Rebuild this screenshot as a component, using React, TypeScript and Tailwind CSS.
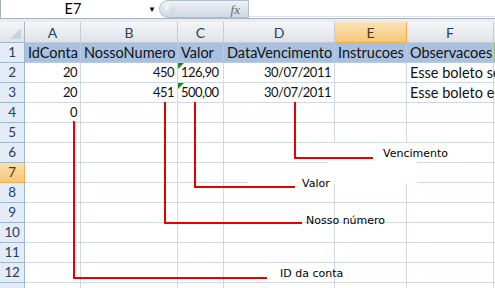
import React from 'react';

const cols = [
  { key: 'A', w: 'w-[56px]' },
  { key: 'B', w: 'w-[97px]' },
  { key: 'C', w: 'w-[46px]' },
  { key: 'D', w: 'w-[111px]' },
  { key: 'E', w: 'w-[72px]' },
  { key: 'F', w: 'w-[87px]' },
];

type Cell = { text?: string; num?: boolean; right?: boolean; flag?: boolean };

const rows: Cell[][] = [
  [{ text: 'IdConta' }, { text: 'NossoNumero' }, { text: 'Valor' }, { text: 'DataVencimento' }, { text: 'Instrucoes' }, { text: 'Observacoes' }],
  [
    { text: '20', num: true, right: true },
    { text: '450', num: true, right: true },
    { text: '126,90', num: true, flag: true },
    { text: '30/07/2011', num: true, right: true },
    {},
    { text: 'Esse boleto se' },
  ],
  [
    { text: '20', num: true, right: true },
    { text: '451', num: true, right: true },
    { text: '500,00', num: true, flag: true },
    { text: '30/07/2011', num: true, right: true },
    {},
    { text: 'Esse boleto e' },
  ],
  [{ text: '0', num: true, right: true }, {}, {}, {}, {}, {}],
];

function Line({ className }: { className: string }) {
  return <div className={`absolute bg-[#e80000] ${className}`} />;
}

function Note({ className, children }: { className: string; children: React.ReactNode }) {
  return (
    <div className={`absolute font-['DejaVu_Sans',sans-serif] text-[11px] leading-[14px] text-black ${className}`}>
      {children}
    </div>
  );
}

export default function App() {
  return (
    <div className="relative w-[495px] h-[288px] overflow-hidden bg-white font-['Lato','Liberation_Sans',sans-serif] text-[14.5px] text-[#111]">
      {/* formula bar */}
      <div className="flex h-[19px] border-b border-[#a7b3c2]">
        <div className="w-[145px] border-l border-[#a7b3c2] flex items-center justify-center text-[14.5px] leading-none text-black">E7</div>
        <div className="w-[14px] flex items-center justify-center text-[8px] text-black">▼</div>
        <div className="relative w-[90px] h-[18px] rounded-l-[9px] border border-[#b3bfcd] bg-linear-to-b from-[#eef2f6] to-[#cfd8e3] flex items-center justify-end pr-[8px]">
          <div className="absolute left-[5px] top-[3px] w-[10px] h-[10px] rounded-full bg-linear-to-br from-[#ffffff] to-[#c3ccd8]" />
          <span className="font-['Liberation_Serif',serif] italic text-[13px] text-[#6b6b6b] leading-none">fx</span>
        </div>
        <div className="flex-1 border-b border-[#dfe3e8] h-[17px]" />
      </div>
      <div className="h-[3px] bg-[#e8edf4]" />

      {/* column headers */}
      <div className="flex h-[21px]">
        <div className="relative w-[25px] border-r border-b border-[#9eb6ce] bg-linear-to-b from-[#f4f5f7] to-[#dfe3e8]">
          <div className="absolute right-[3px] bottom-[3px] w-0 h-0 border-l-[11px] border-l-transparent border-b-[11px] border-b-[#c9d2dd]" />
        </div>
        {cols.map((c) => (
          <div
            key={c.key}
            className={`${c.w} flex items-center justify-center border-r border-b text-[14px] ${
              c.key === 'E'
                ? 'bg-linear-to-b from-[#fbe3b6] to-[#f6c674] border-[#f0b050] text-[#4a3a20]'
                : 'bg-linear-to-b from-[#f4f5f7] to-[#dfe3e8] border-[#c5cbd3] text-[#27415f]'
            }`}
          >
            {c.key}
          </div>
        ))}
        <div className="flex-1 border-b border-[#c5cbd3] bg-linear-to-b from-[#f4f5f7] to-[#dfe3e8]" />
      </div>

      {/* grid rows */}
      {Array.from({ length: 13 }).map((_, i) => {
        const n = i + 1;
        const data = rows[i] ?? [];
        const header = n === 1;
        return (
          <div key={n} className="flex h-[20px]">
            <div
              className={`w-[25px] flex items-center justify-center border-r border-b text-[13.5px] tracking-[-0.3px] ${
                n === 7
                  ? 'bg-linear-to-b from-[#fbe0ae] to-[#f6c674] border-[#f0b050] text-[#4a3a20]'
                  : 'bg-[#e4ecf7] border-[#9eb6ce] text-[#27415f]'
              }`}
            >
              {n < 13 ? n : ''}
            </div>
            {cols.map((c, j) => {
              const cell = data[j] ?? {};
              return (
                <div
                  key={c.key}
                  className={`relative ${c.w} flex items-center px-[3px] whitespace-nowrap border-r border-b ${
                    header ? 'bg-[#a8c1e1] border-[#b8cbe4]' : 'border-[#d0d7e5]'
                  } ${cell.right ? 'justify-end' : 'justify-start'} ${cell.num ? 'text-[13px] tracking-[-0.5px]' : ''}`}
                >
                  {cell.flag && (
                    <div className="absolute left-0 top-0 w-0 h-0 border-t-[6px] border-t-[#1a8a1a] border-r-[6px] border-r-transparent" />
                  )}
                  {cell.text}
                </div>
              );
            })}
            <div className={`flex-1 border-b ${header ? 'bg-[#9bbb59] border-[#b8cbe4]' : 'border-[#d0d7e5]'}`} />
          </div>
        );
      })}

      {/* annotation text boxes and leader lines */}
      <div className="absolute left-[328px] top-[143px] w-[89px] h-[41px] bg-white" />
      <div className="absolute left-[248px] top-[164px] w-[169px] h-[20px] bg-white" />

      <Line className="left-[73px] top-[121px] w-[1.5px] h-[157px]" />
      <Line className="left-[73px] top-[277px] w-[194px] h-[1.5px]" />

      <Line className="left-[164px] top-[102px] w-[1.5px] h-[121px]" />
      <Line className="left-[164px] top-[222px] w-[138px] h-[1.5px]" />

      <Line className="left-[194px] top-[102px] w-[1.5px] h-[85px]" />
      <Line className="left-[194px] top-[186px] w-[101px] h-[1.5px]" />

      <Line className="left-[294px] top-[102px] w-[1.5px] h-[56px]" />
      <Line className="left-[294px] top-[157px] w-[79px] h-[1.5px]" />

      <Note className="left-[383px] top-[147px]">Vencimento</Note>
      <Note className="left-[302px] top-[177px]">Valor</Note>
      <Note className="left-[306px] top-[214px]">Nosso número</Note>
      <Note className="left-[280px] top-[267px]">ID da conta</Note>
    </div>
  );
}
